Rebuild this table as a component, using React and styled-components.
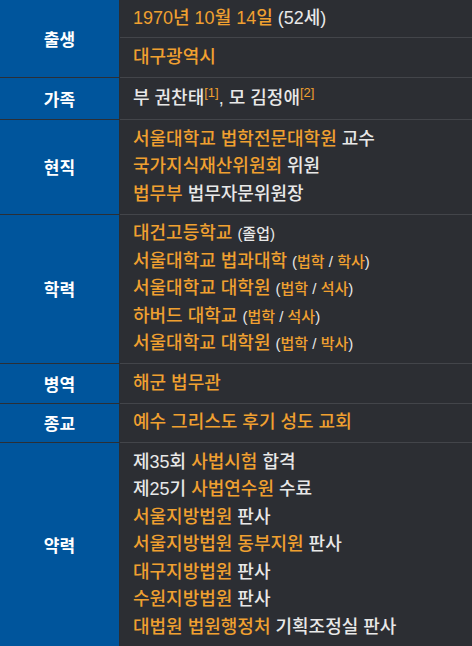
import React from 'react'
import styled, { createGlobalStyle } from 'styled-components'

const Global = createGlobalStyle`
  html, body {
    margin: 0;
    padding: 0;
    background: #2c2e33;
  }
  body {
    font-family: "Liberation Sans", "Noto Sans CJK KR", sans-serif;
    color: #e8e8e8;
  }
`

const Table = styled.div`
  display: grid;
  grid-template-columns: 120px 1fr;
  width: 472px;
  background: #2c2e33;
`

const Label = styled.div`
  display: flex;
  align-items: center;
  justify-content: center;
  background: #00559c;
  color: #ffffff;
  font-weight: bold;
  font-size: 17px;
  border-top: ${p => (p.$first ? 'none' : '1px solid #2b2f36')};
  border-right: 1px solid #2b2d31;
`

const Content = styled.div`
  display: flex;
  flex-direction: column;
  border-top: ${p => (p.$first ? 'none' : '1px solid #43454a')};
`

const Cell = styled.div`
  padding: ${p => p.$top ?? 5.5}px 10px ${p => p.$bottom ?? 5.5}px 13px;
  font-size: 18px;
  font-weight: 500;
  & + & {
    border-top: 1px solid #43454a;
  }
`

const Line = styled.div`
  height: 27.5px;
  line-height: 27.5px;
  white-space: nowrap;
`

const A = styled.span`
  color: #f0a030;
`

const Note = styled.span`
  font-size: 15px;
  line-height: 1;
`

const Sup = styled.sup`
  color: #f0a030;
  font-size: 13px;
  line-height: 0;
`

const data = [
  {
    label: '출생',
    cells: [
      { top: 5, bottom: 4.5, lines: [<><A>1970년 10월 14일</A> (52세)</>] },
      { lines: [<A>대구광역시</A>] },
    ],
  },
  {
    label: '가족',
    cells: [{ top: 7, bottom: 7, lines: [<>부 권찬태<Sup>[1]</Sup>, 모 김정애<Sup>[2]</Sup></>] }],
  },
  {
    label: '현직',
    cells: [{
      lines: [
        <><A>서울대학교 법학전문대학원</A> 교수</>,
        <><A>국가지식재산위원회</A> 위원</>,
        <><A>법무부</A> 법무자문위원장</>,
      ],
    }],
  },
  {
    label: '학력',
    cells: [{
      lines: [
        <><A>대건고등학교</A> <Note>(졸업)</Note></>,
        <><A>서울대학교 법과대학</A> <Note>(<A>법학</A> / <A>학사</A>)</Note></>,
        <><A>서울대학교 대학원</A> <Note>(<A>법학</A> / <A>석사</A>)</Note></>,
        <><A>하버드 대학교</A> <Note>(<A>법학</A> / <A>석사</A>)</Note></>,
        <><A>서울대학교 대학원</A> <Note>(<A>법학</A> / <A>박사</A>)</Note></>,
      ],
    }],
  },
  { label: '병역', cells: [{ lines: [<A>해군 법무관</A>] }] },
  { label: '종교', cells: [{ lines: [<A>예수 그리스도 후기 성도 교회</A>] }] },
  {
    label: '약력',
    cells: [{
      lines: [
        <>제35회 <A>사법시험</A> 합격</>,
        <>제25기 <A>사법연수원</A> 수료</>,
        <><A>서울지방법원</A> 판사</>,
        <><A>서울지방법원 동부지원</A> 판사</>,
        <><A>대구지방법원</A> 판사</>,
        <><A>수원지방법원</A> 판사</>,
        <><A>대법원 법원행정처</A> 기획조정실 판사</>,
      ],
    }],
  },
]

export default function App() {
  return (
    <>
      <Global />
      <Table>
        {data.map((row, i) => (
          <React.Fragment key={row.label}>
            <Label $first={i === 0}>{row.label}</Label>
            <Content $first={i === 0}>
              {row.cells.map((cell, j) => (
                <Cell key={j} $top={cell.top} $bottom={cell.bottom}>
                  {cell.lines.map((l, k) => <Line key={k}>{l}</Line>)}
                </Cell>
              ))}
            </Content>
          </React.Fragment>
        ))}
      </Table>
    </>
  )
}
